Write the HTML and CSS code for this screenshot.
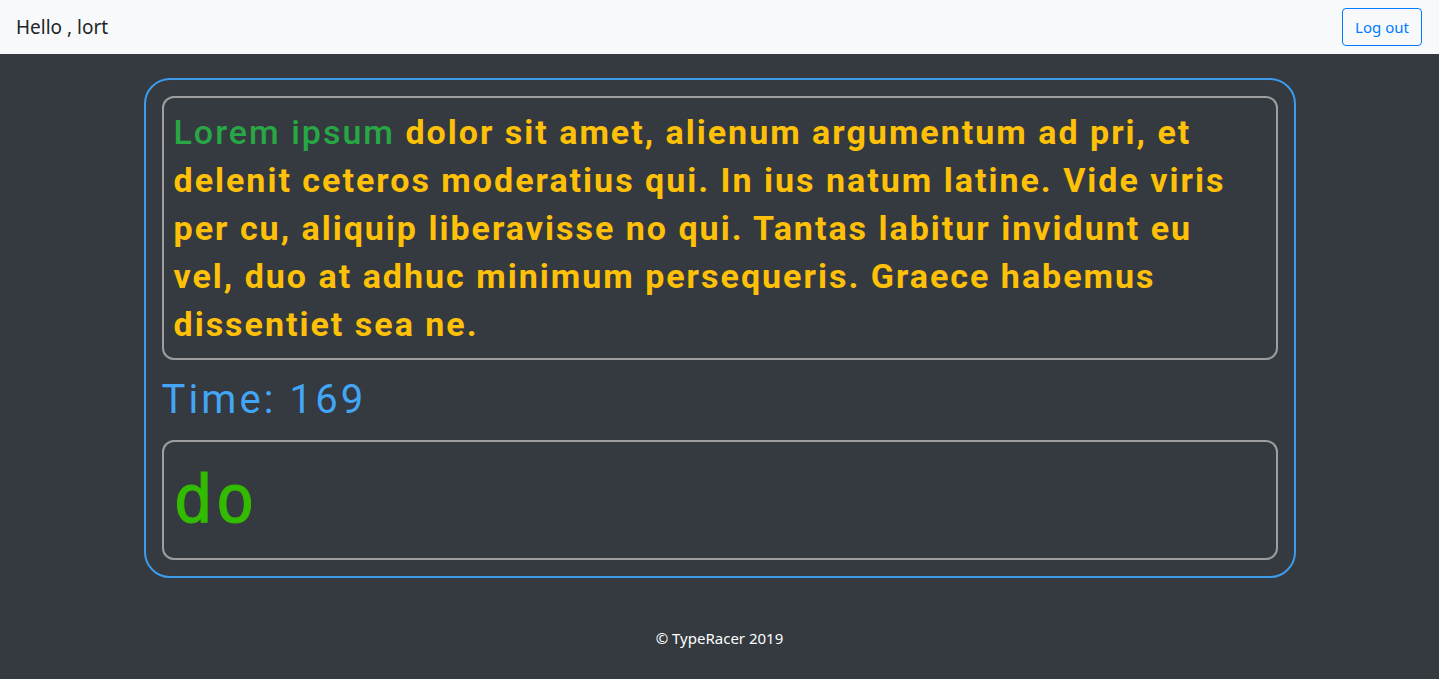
FILE: index.html
```html
<!DOCTYPE html>
<html lang="en">
<head>
<meta charset="utf-8">
<title>TypeRacer</title>
<link rel="stylesheet" href="styles.css">
</head>
<body>
<nav class="navbar">
  <span class="brand">Hello , lort</span>
  <button class="btn-logout">Log out</button>
</nav>
<main class="main">
  <section class="race">
    <div class="passage">
      <span class="typed">Lorem ipsum</span> <span class="rest">dolor sit amet, alienum argumentum ad pri, et delenit ceteros moderatius qui. In ius natum latine. Vide viris per cu, aliquip liberavisse no qui. Tantas labitur invidunt eu vel, duo at adhuc minimum persequeris. Graece habemus dissentiet sea ne.</span>
    </div>
    <div class="timer">Time: 169</div>
    <div class="input-box"><span class="input-text">do</span></div>
  </section>
</main>
<footer class="footer">© TypeRacer 2019</footer>
</body>
</html>
```
FILE: styles.css
```css
* { box-sizing: border-box; }
html, body { margin: 0; padding: 0; }
body {
  background: #343a40;
  font-family: "Noto Sans", "Open Sans", sans-serif;
  min-height: 679px;
}
.navbar {
  background: #f8f9fa;
  height: 54px;
  padding: 8px 17px 8px 16px;
  display: flex;
  align-items: center;
  justify-content: space-between;
}
.brand {
  font-size: 19px;
  color: #212529;
}
.btn-logout {
  font-family: "Noto Sans", "Open Sans", sans-serif;
  font-size: 15px;
  color: #007bff;
  background: transparent;
  border: 1px solid #007bff;
  border-radius: 4px;
  height: 38px;
  width: 80px;
  padding: 0;
}
.main {
  padding-top: 24px;
}
.race {
  width: 1152px;
  margin: 0 auto;
  border: 2px solid #3d9be9;
  border-radius: 26px;
  padding: 16px;
}
.passage {
  border: 2px solid #9e9e9e;
  border-radius: 12px;
  padding: 10px 20px 10px 10px;
  font-family: Roboto, sans-serif;
  font-size: 34px;
  line-height: 48px;
  letter-spacing: 2px;
}
.typed { color: #28a745; font-weight: 500; }
.rest { color: #ffc107; font-weight: 700; }
.timer {
  font-family: Roboto, sans-serif;
  font-weight: 400;
  font-size: 40px;
  line-height: 60px;
  letter-spacing: 3.1px;
  color: #42a5f5;
  margin: 10px 0;
}
.input-box {
  border: 2px solid #9e9e9e;
  border-radius: 12px;
  padding: 10px 10px;
  height: 120px;
}
.input-text {
  font-family: "DejaVu Sans Mono", monospace;
  font-weight: 400;
  font-size: 66px;
  line-height: 96px;
  letter-spacing: 2px;
  -webkit-text-stroke: 1px #33bb00;
  color: #33bb00;
}
.footer {
  text-align: center;
  color: #ffffff;
  font-size: 15px;
  padding-top: 50px;
}
```
